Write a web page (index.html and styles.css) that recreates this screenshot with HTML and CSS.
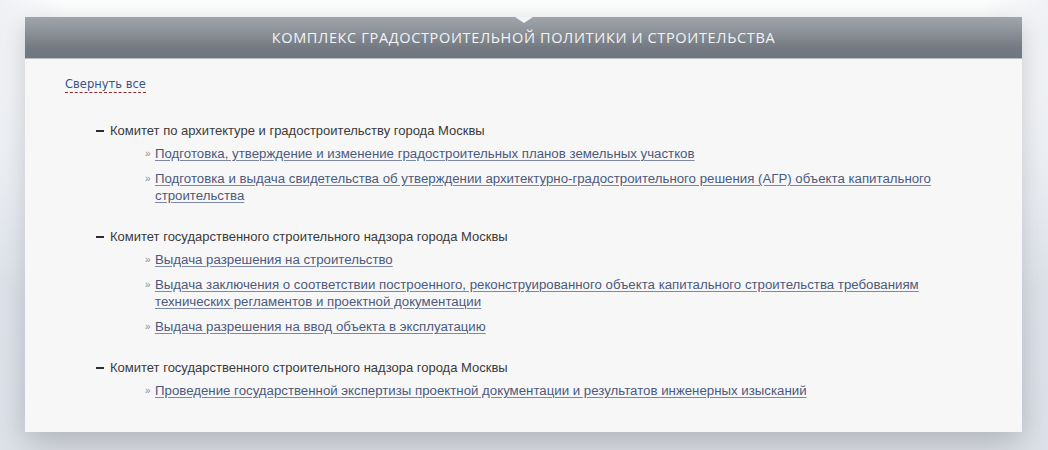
FILE: index.html
```html
<!DOCTYPE html>
<html lang="ru">
<head>
<meta charset="utf-8">
<title>Комплекс градостроительной политики и строительства</title>
<link rel="stylesheet" href="styles.css">
</head>
<body>
<div class="page">
  <section class="panel">
    <header class="panel-head">Комплекс градостроительной политики и строительства</header>
    <div class="panel-body">
      <a class="toggle" href="#">Свернуть все</a>
      <div class="group">
        <div class="group-title"><span class="minus"></span>Комитет по архитектуре и градостроительству города Москвы</div>
        <ul class="links">
          <li><a href="#">Подготовка, утверждение и изменение градостроительных планов земельных участков</a></li>
          <li><a href="#">Подготовка и выдача свидетельства об утверждении архитектурно-градостроительного решения (АГР) объекта капитального строительства</a></li>
        </ul>
      </div>
      <div class="group">
        <div class="group-title"><span class="minus"></span>Комитет государственного строительного надзора города Москвы</div>
        <ul class="links">
          <li><a href="#">Выдача разрешения на строительство</a></li>
          <li><a href="#">Выдача заключения о соответствии построенного, реконструированного объекта капитального строительства требованиям технических регламентов и проектной документации</a></li>
          <li><a href="#">Выдача разрешения на ввод объекта в эксплуатацию</a></li>
        </ul>
      </div>
      <div class="group">
        <div class="group-title"><span class="minus"></span>Комитет государственного строительного надзора города Москвы</div>
        <ul class="links">
          <li><a href="#">Проведение государственной экспертизы проектной документации и результатов инженерных изысканий</a></li>
        </ul>
      </div>
    </div>
  </section>
</div>
</body>
</html>
```
FILE: styles.css
```css
html, body {
  margin: 0;
  padding: 0;
}
body {
  width: 1048px;
  height: 450px;
  overflow: hidden;
  background:
    radial-gradient(ellipse 760px 300px at 50% 15%, rgba(255,255,255,1) 45%, rgba(255,255,255,0) 100%),
    linear-gradient(to right, #dde2ea 0%, rgba(221,226,234,0) 6%, rgba(221,226,234,0) 94%, #dde2ea 100%),
    linear-gradient(to bottom, #ffffff 0%, #fafafb 30%, #e4e7ed 70%, #d6d9de 100%);
  font-family: "Liberation Sans", Arial, sans-serif;
}
.page {
  padding: 17px 26px 0 25px;
}
.panel {
  position: relative;
  background: #f8f7f8;
  box-shadow: 0 6px 26px rgba(70, 76, 90, 0.3);
}
.panel-head {
  position: relative;
  height: 41px;
  line-height: 42px;
  text-align: center;
  text-transform: uppercase;
  color: #f3f4f5;
  font-family: "Open Sans", "DejaVu Sans", sans-serif;
  font-size: 14.5px;
  letter-spacing: 0.65px;
  background: linear-gradient(to bottom, #a1a5ab 0%, #8a8f96 40%, #737a82 75%, #6f767e 100%);
  border-bottom: 1px solid #b9bdc2;
}
.panel-head::before {
  content: "";
  position: absolute;
  left: 50%;
  top: 0;
  margin-left: -9px;
  border-left: 9px solid transparent;
  border-right: 9px solid transparent;
  border-top: 6px solid #f4f4f5;
}
.panel-body {
  padding: 16px 40px 33px 40px;
  font-size: 13px;
  line-height: 17px;
}
.toggle {
  display: inline-block;
  font-family: "DejaVu Sans", Verdana, sans-serif;
  font-size: 11.5px;
  line-height: 15px;
  color: #3b5384;
  text-decoration: none;
  border-bottom: 1px dashed #8c2b2b;
  margin-bottom: 29px;
}
.group + .group {
  margin-top: 24px;
}
.group-title {
  color: #3a3a3a;
  padding-left: 45px;
  position: relative;
}
.minus {
  position: absolute;
  left: 31px;
  top: 8px;
  width: 8px;
  height: 2px;
  background: #2c2c2c;
}
.links {
  list-style: none;
  margin: 6px 0 0 0;
  padding: 0 0 0 90px;
  font-size: 13.25px;
}
.links li {
  position: relative;
  padding-right: 20px;
}
.links li + li {
  margin-top: 8px;
}
.links li::before {
  content: "»";
  position: absolute;
  left: -10px;
  top: 0;
  color: #8a8e95;
  font-size: 10px;
}
.links a {
  color: #4b5a7c;
  text-decoration: underline;
  text-decoration-color: #7d89a3;
  text-underline-offset: 2px;
}
```
